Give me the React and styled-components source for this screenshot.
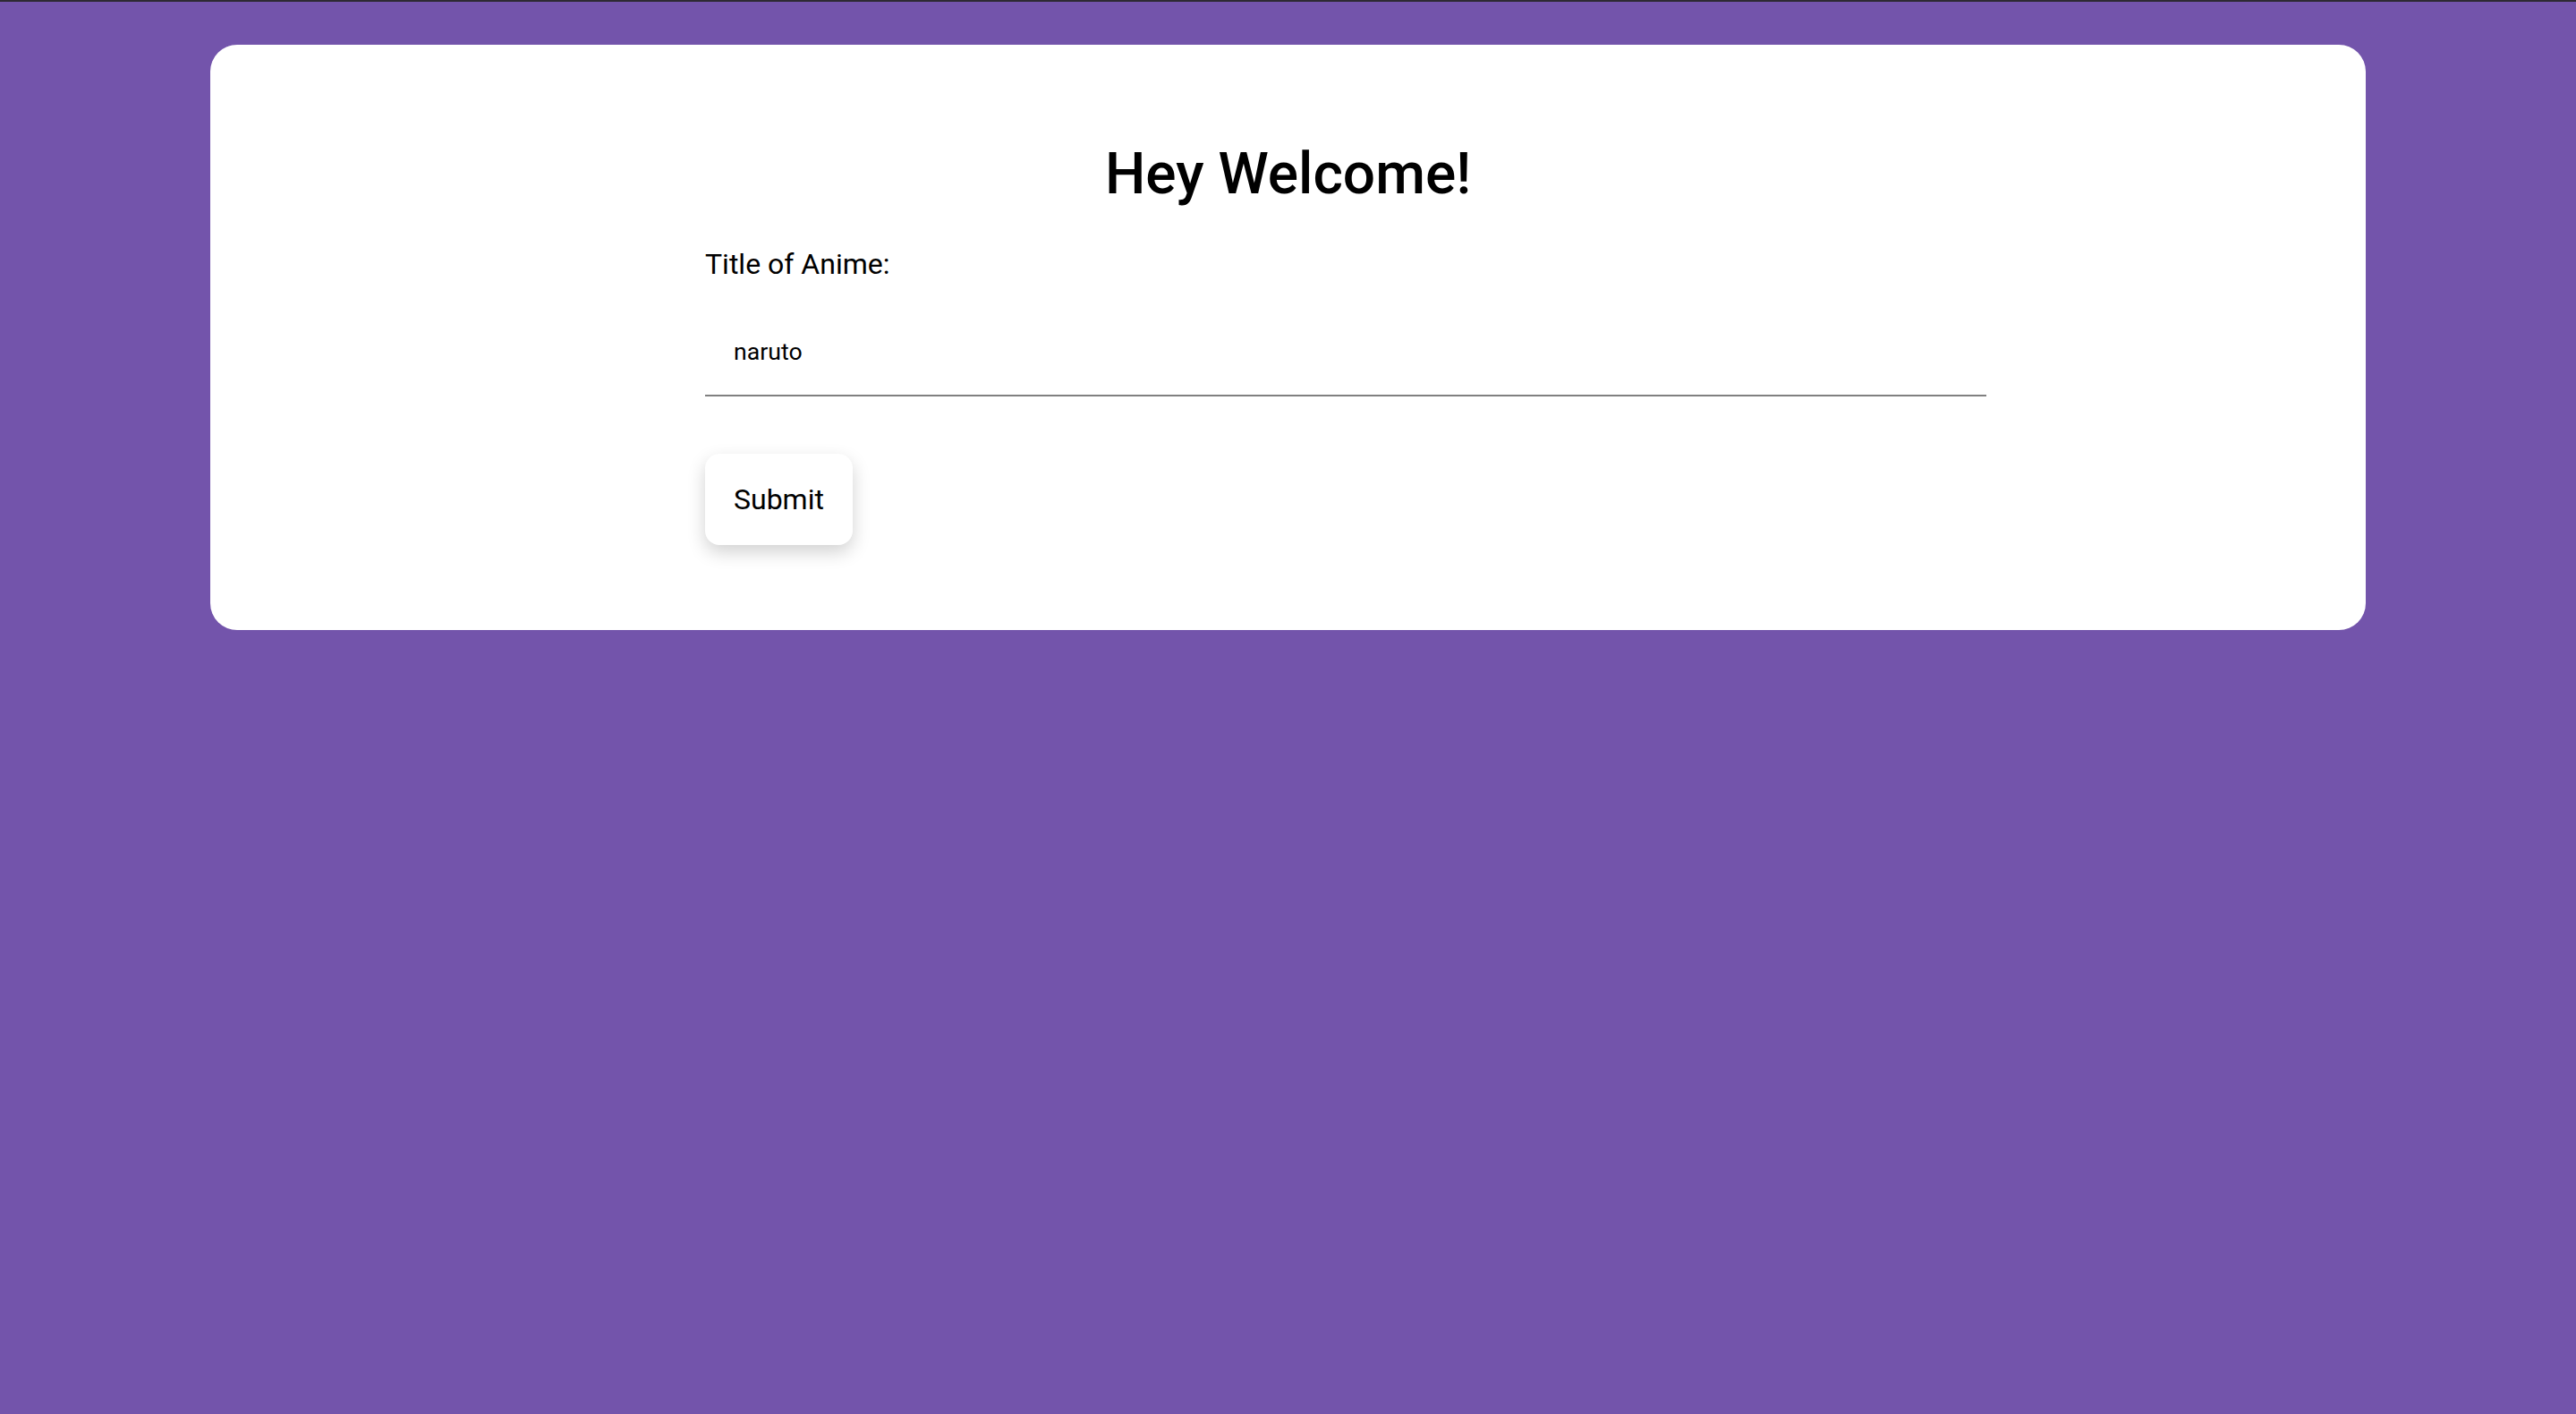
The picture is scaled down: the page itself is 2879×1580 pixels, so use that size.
import React, { useState } from "react";
import styled, { createGlobalStyle } from "styled-components";

const GlobalStyle = createGlobalStyle`
  html, body {
    margin: 0;
    padding: 0;
    min-height: 100%;
  }
  body {
    background: #7354ab;
    border-top: 2px solid #2e2a33;
    font-family: Roboto, "Liberation Sans", sans-serif;
    min-height: 100vh;
    box-sizing: border-box;
  }
`;

const App = () => {
  const [title, setTitle] = useState("naruto");

  return (
    <>
      <GlobalStyle />
      <Page>
        <Card>
          <Heading>Hey Welcome!</Heading>
          <Form onSubmit={(e) => e.preventDefault()}>
            <Label htmlFor="anime-title">Title of Anime:</Label>
            <TextInput
              id="anime-title"
              type="text"
              value={title}
              onChange={(e) => setTitle(e.target.value)}
            />
            <SubmitButton type="submit">Submit</SubmitButton>
          </Form>
        </Card>
      </Page>
    </>
  );
};

const Page = styled.div`
  padding: 48px 235px 0;
`;

const Card = styled.div`
  background: #ffffff;
  border-radius: 30px;
  padding: 62px 0 95px;
`;

const Heading = styled.h1`
  margin: 0 0 44px;
  padding-top: 45px;
  text-align: center;
  font-size: 64px;
  font-weight: 500;
  color: #000;
`;

const Form = styled.form`
  display: flex;
  flex-direction: column;
  align-items: flex-start;
  width: 1432px;
  margin-left: 553px;
`;

const Label = styled.label`
  font-size: 32px;
  color: #000;
  margin-bottom: 31px;
`;

const TextInput = styled.input`
  box-sizing: border-box;
  width: 100%;
  padding: 32px 32px;
  border: none;
  border-bottom: 2px solid #808080;
  outline: none;
  font-family: Roboto, "Liberation Sans", sans-serif;
  font-size: 26.67px;
  color: #000;
  background: transparent;
`;

const SubmitButton = styled.button`
  margin-top: 64px;
  padding: 32px;
  border: none;
  border-radius: 16px;
  background: #ffffff;
  font-family: Roboto, "Liberation Sans", sans-serif;
  font-size: 32px;
  color: #000;
  box-shadow: 0 8px 20px rgba(0, 0, 0, 0.18);
  cursor: pointer;
`;

export default App;
